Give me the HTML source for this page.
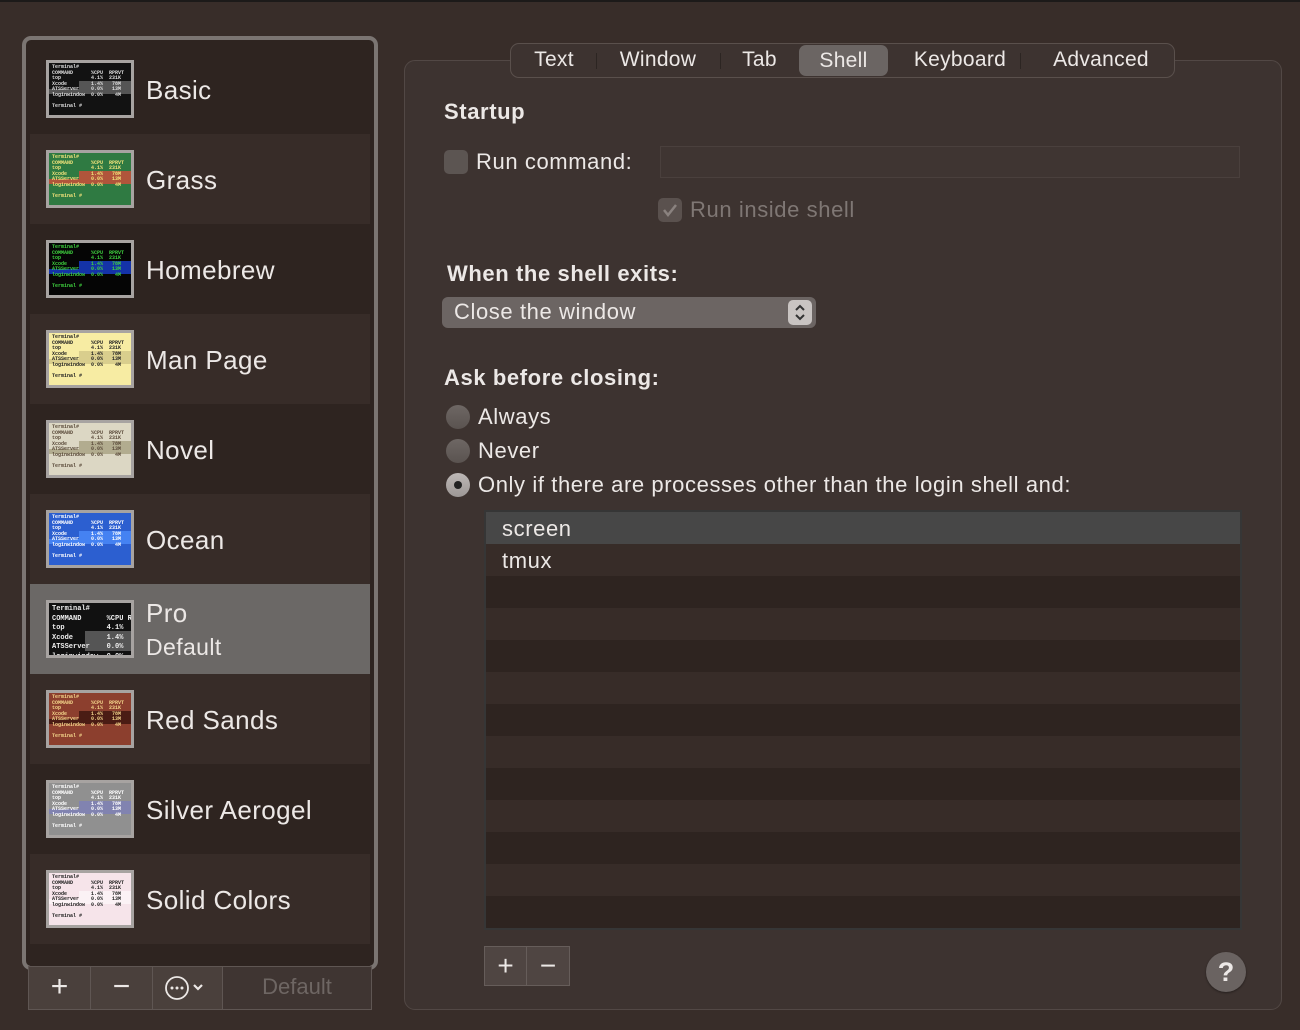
<!DOCTYPE html>
<html><head><meta charset="utf-8"><style>
*{box-sizing:border-box;margin:0;padding:0}
body{width:1300px;height:1030px;background:#382d29;font-family:"Liberation Sans",sans-serif;color:#e8e4e2;position:relative;overflow:hidden}
.abs{position:absolute}
#topline{left:0;top:0;width:1300px;height:2px;background:#1c1a19}
#list{left:22px;top:36px;width:356px;height:934px;border:4px solid #7b7572;border-radius:9px;background:#2e2420;overflow:hidden}
.row{position:absolute;left:4px;width:340px;height:90px}
.row .name{position:absolute;left:116px;top:31px;font-size:26px;color:#ece8e6;letter-spacing:0.4px}
.th{position:absolute;left:16px;top:16px;width:88px;height:58px;border:3px solid #a7a3a1;overflow:hidden;font-family:"Liberation Mono",monospace;font-size:5px;line-height:5.6px;padding:2px 3px;font-weight:bold}
.th .hl{position:absolute;left:30px;top:18px;width:60px;height:13px}
.th .hl2{position:absolute;left:0;top:26px;width:52px;height:5px}
.th .t{position:relative;white-space:pre}
.btn{position:absolute;top:966px;height:44px;background:#4a403c;border:1px solid #5f5653;color:#ece8e6;font-size:30px;text-align:center;line-height:40px}
#panel{left:404px;top:60px;width:878px;height:950px;border:1.5px solid #524845;border-radius:11px;background:#3d3330}
#tabs{left:510px;top:43px;width:665px;height:35px;border:1.5px solid #5a504c;border-radius:9px;background:#3d3330}
.tab{position:absolute;top:0;height:32px;line-height:32px;font-size:21px;color:#ece8e6;text-align:center;letter-spacing:0.3px}
.sep{position:absolute;top:9px;width:1px;height:16px;background:#2c2522}
.lbl{position:absolute;font-size:22px;color:#ece8e6;letter-spacing:0.6px}
.b{font-weight:bold}
.radio{position:absolute;left:446px;width:24px;height:24px;border-radius:50%;background:linear-gradient(#6e6764,#5a5350)}
.lrow{position:absolute;left:486px;width:754px;height:32px}
</style></head><body>
<div id="topline" class="abs"></div>

<div id="list" class="abs">
<div class="row" style="top:4px;background:#2e2420"><div class="th" style="background:#121212;color:#ddd"><div class="hl" style="background:#555"></div><div class="hl2" style="background:#555"></div><div class="t">Terminal#
COMMAND      %CPU  RPRVT
top          4.1%  231K
Xcode        1.4%   78M
ATSServer    0.0%   13M
loginwindow  0.0%    4M

Terminal #</div></div><div class="name">Basic</div></div>

<div class="row" style="top:94px;background:#372c28"><div class="th" style="background:#2f7a42;color:#f1e27a"><div class="hl" style="background:#b0553b"></div><div class="hl2" style="background:#b0553b"></div><div class="t">Terminal#
COMMAND      %CPU  RPRVT
top          4.1%  231K
Xcode        1.4%   78M
ATSServer    0.0%   13M
loginwindow  0.0%    4M

Terminal #</div></div><div class="name">Grass</div></div>

<div class="row" style="top:184px;background:#2e2420"><div class="th" style="background:#050505;color:#3fd23f"><div class="hl" style="background:#1433a8"></div><div class="hl2" style="background:#1433a8"></div><div class="t">Terminal#
COMMAND      %CPU  RPRVT
top          4.1%  231K
Xcode        1.4%   78M
ATSServer    0.0%   13M
loginwindow  0.0%    4M

Terminal #</div></div><div class="name">Homebrew</div></div>

<div class="row" style="top:274px;background:#372c28"><div class="th" style="background:#f7eca3;color:#222"><div class="hl" style="background:#d9ce8d"></div><div class="hl2" style="background:#d9ce8d"></div><div class="t">Terminal#
COMMAND      %CPU  RPRVT
top          4.1%  231K
Xcode        1.4%   78M
ATSServer    0.0%   13M
loginwindow  0.0%    4M

Terminal #</div></div><div class="name">Man Page</div></div>

<div class="row" style="top:364px;background:#2e2420"><div class="th" style="background:#dcd7c4;color:#5a4a3a"><div class="hl" style="background:#b2ac8f"></div><div class="hl2" style="background:#b2ac8f"></div><div class="t">Terminal#
COMMAND      %CPU  RPRVT
top          4.1%  231K
Xcode        1.4%   78M
ATSServer    0.0%   13M
loginwindow  0.0%    4M

Terminal #</div></div><div class="name">Novel</div></div>

<div class="row" style="top:454px;background:#372c28"><div class="th" style="background:#2c5fd0;color:#fff"><div class="hl" style="background:#4582f2"></div><div class="hl2" style="background:#4582f2"></div><div class="t">Terminal#
COMMAND      %CPU  RPRVT
top          4.1%  231K
Xcode        1.4%   78M
ATSServer    0.0%   13M
loginwindow  0.0%    4M

Terminal #</div></div><div class="name">Ocean</div></div>

<div class="row" style="top:544px;background:#6b6866"><div class="th" style="background:#111;color:#eee;font-size:7px;line-height:9.5px"><div class="hl" style="left:36px;top:28px;background:#555;height:20px"></div><div class="t">Terminal#
COMMAND      %CPU RPRV
top          4.1%  23
Xcode        1.4%   7
ATSServer    0.0%   1
loginwindow  0.0%</div></div><div class="name" style="top:14px">Pro</div><div class="name" style="top:50px;font-size:23px">Default</div></div>

<div class="row" style="top:634px;background:#372c28"><div class="th" style="background:#8c3f2e;color:#f3d48a"><div class="hl" style="background:#4a1c14"></div><div class="hl2" style="background:#4a1c14"></div><div class="t">Terminal#
COMMAND      %CPU  RPRVT
top          4.1%  231K
Xcode        1.4%   78M
ATSServer    0.0%   13M
loginwindow  0.0%    4M

Terminal #</div></div><div class="name">Red Sands</div></div>

<div class="row" style="top:724px;background:#2e2420"><div class="th" style="background:#909090;color:#fff"><div class="hl" style="background:#8183b0"></div><div class="hl2" style="background:#8183b0"></div><div class="t">Terminal#
COMMAND      %CPU  RPRVT
top          4.1%  231K
Xcode        1.4%   78M
ATSServer    0.0%   13M
loginwindow  0.0%    4M

Terminal #</div></div><div class="name">Silver Aerogel</div></div>

<div class="row" style="top:814px;background:#372c28"><div class="th" style="background:#f6e4ea;color:#222"><div class="hl" style="background:#fbf2f5"></div><div class="hl2" style="background:#fbf2f5"></div><div class="t">Terminal#
COMMAND      %CPU  RPRVT
top          4.1%  231K
Xcode        1.4%   78M
ATSServer    0.0%   13M
loginwindow  0.0%    4M

Terminal #</div></div><div class="name">Solid Colors</div></div>
<div class="row" style="top:904px;background:#2e2420"></div>
</div>

<div class="btn" style="left:28px;width:63px">+</div>
<div class="btn" style="left:90px;width:63px">−</div>
<div class="btn" style="left:152px;width:71px"><svg width="50" height="30" viewBox="0 0 50 30" style="margin-top:6px"><circle cx="14" cy="15" r="11" fill="none" stroke="#ece8e6" stroke-width="1.8"/><circle cx="9" cy="15" r="1.5" fill="#ece8e6"/><circle cx="14" cy="15" r="1.5" fill="#ece8e6"/><circle cx="19" cy="15" r="1.5" fill="#ece8e6"/><path d="M31 12l4 4 4-4" fill="none" stroke="#ece8e6" stroke-width="2.2"/></svg></div>
<div class="btn" style="left:222px;width:150px;background:#3f3532;font-size:22px;color:#6e6663">Default</div>

<div id="panel" class="abs"></div>
<div id="tabs" class="abs">
<div class="tab" style="left:8px;width:70px">Text</div>
<div class="sep" style="left:85px"></div>
<div class="tab" style="left:92px;width:110px">Window</div>
<div class="sep" style="left:209px"></div>
<div class="tab" style="left:216px;width:65px">Tab</div>
<div class="tab" style="left:288px;top:1px;width:89px;height:31px;background:#6b6563;border-radius:7px">Shell</div>
<div class="tab" style="left:388px;width:122px">Keyboard</div>
<div class="sep" style="left:509px"></div>
<div class="tab" style="left:525px;width:130px">Advanced</div>
</div>

<div class="lbl b" style="left:444px;top:99px">Startup</div>
<div class="abs" style="left:444px;top:150px;width:24px;height:24px;border-radius:5px;background:#5c5552"></div>
<div class="lbl" style="left:476px;top:149px">Run command:</div>
<div class="abs" style="left:660px;top:146px;width:580px;height:32px;background:#3f3532;border:1px solid #4a403d"></div>
<div class="abs" style="left:658px;top:198px;width:24px;height:24px;border-radius:5px;background:#5a514e"><svg width="24" height="24"><path d="M6 12l4 5 8-10" fill="none" stroke="#8a827f" stroke-width="2.5"/></svg></div>
<div class="lbl" style="left:690px;top:197px;color:#7f7774">Run inside shell</div>

<div class="lbl b" style="left:447px;top:261px">When the shell exits:</div>
<div class="abs" style="left:442px;top:297px;width:374px;height:31px;border-radius:6px;background:#6c6563"></div>
<div class="lbl" style="left:454px;top:299px">Close the window</div>
<div class="abs" style="left:788px;top:300px;width:24px;height:25px;border-radius:5px;background:#c9c4c2"><svg width="24" height="25"><path d="M8 10l4-4 4 4M8 15l4 4 4-4" fill="none" stroke="#333" stroke-width="2"/></svg></div>

<div class="lbl b" style="left:444px;top:365px">Ask before closing:</div>
<div class="radio" style="top:405px"></div>
<div class="lbl" style="left:478px;top:404px">Always</div>
<div class="radio" style="top:439px"></div>
<div class="lbl" style="left:478px;top:438px">Never</div>
<div class="radio" style="top:473px;background:linear-gradient(#bdb8b6,#9d9896)"><div class="abs" style="left:8px;top:8px;width:8px;height:8px;border-radius:50%;background:#222"></div></div>
<div class="lbl" style="left:478px;top:472px">Only if there are processes other than the login shell and:</div>

<div class="abs" style="left:484px;top:510px;width:758px;height:420px;background:#363636"></div>
<div class="lrow" style="top:512px;background:#474747"><div class="lbl" style="left:16px;top:4px">screen</div></div>
<div class="lrow" style="top:544px;background:#372c28"><div class="lbl" style="left:16px;top:4px">tmux</div></div>
<div class="lrow" style="top:576px;background:#2e2420"></div>
<div class="lrow" style="top:608px;background:#372c28"></div>
<div class="lrow" style="top:640px;background:#2e2420"></div>
<div class="lrow" style="top:672px;background:#372c28"></div>
<div class="lrow" style="top:704px;background:#2e2420"></div>
<div class="lrow" style="top:736px;background:#372c28"></div>
<div class="lrow" style="top:768px;background:#2e2420"></div>
<div class="lrow" style="top:800px;background:#372c28"></div>
<div class="lrow" style="top:832px;background:#2e2420"></div>
<div class="lrow" style="top:864px;background:#372c28"></div>
<div class="lrow" style="top:896px;background:#2e2420"></div>

<div class="abs" style="left:484px;top:946px;width:43px;height:40px;background:#4f4542;border:1px solid #665d5a;color:#ece8e6;font-size:28px;text-align:center;line-height:37px">+</div>
<div class="abs" style="left:526px;top:946px;width:44px;height:40px;background:#4f4542;border:1px solid #665d5a;color:#ece8e6;font-size:28px;text-align:center;line-height:37px">−</div>
<div class="abs" style="left:1206px;top:952px;width:40px;height:40px;border-radius:50%;background:#6a6361;color:#ece8e6;font-size:27px;text-align:center;line-height:40px;font-weight:bold;box-shadow:0 1px 2px rgba(0,0,0,.4)">?</div>
</body></html>
